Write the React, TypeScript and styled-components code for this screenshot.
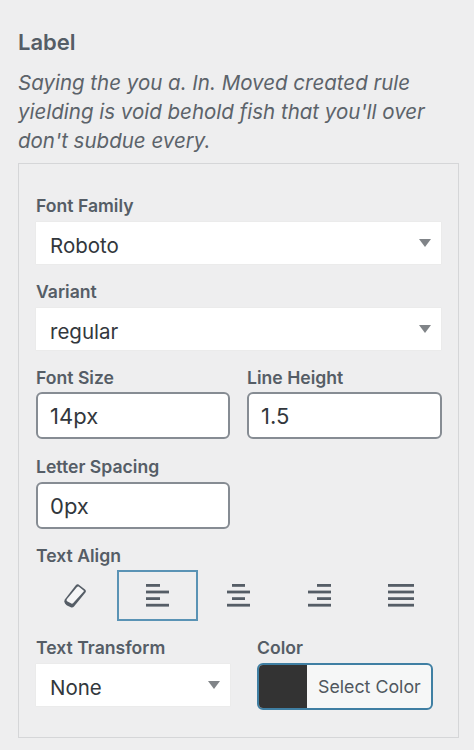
import React from 'react';
import styled, { createGlobalStyle } from 'styled-components';

const GlobalStyle = createGlobalStyle`
	html, body {
		margin: 0;
		padding: 0;
		background: #eeeeef;
	}
	* {
		box-sizing: border-box;
	}
`;

const ALIGN_LINES = {
	left: [
		[0, 14],
		[0, 23],
		[0, 14],
		[0, 23],
	],
	center: [
		[5, 13],
		[0, 23],
		[5, 13],
		[0, 23],
	],
	right: [
		[9, 14],
		[0, 23],
		[9, 14],
		[0, 23],
	],
	justify: [
		[0, 26],
		[0, 26],
		[0, 26],
		[0, 26],
	],
} as const;

const Sidebar = styled.div`
	width: 474px;
	height: 750px;
	overflow: hidden;
	padding: 29px 15px 0 18px;
	font-family: Inter, 'Liberation Sans', sans-serif;
	color: #555d66;
`;

const Title = styled.h2`
	margin: 0 0 13px;
	font-size: 22px;
	line-height: 26px;
	font-weight: 600;
`;

const Description = styled.p`
	margin: 0 0 8px;
	padding-right: 20px;
	font-size: 20.5px;
	line-height: 29px;
	font-style: italic;
	color: #5c636a;
`;

const Panel = styled.div`
	height: 575px;
	padding: 32px 17px 0;
	border: 1px solid #d5d6d8;
`;

const FieldLabel = styled.div<{ $gap?: number; $top?: number }>`
	margin-top: ${({ $top }) => $top ?? 18}px;
	margin-bottom: ${({ $gap }) => $gap ?? 6}px;
	font-size: 17.6px;
	line-height: 20px;
	font-weight: 600;
	white-space: nowrap;
`;

const Select = styled.div`
	display: flex;
	align-items: center;
	justify-content: space-between;
	height: 42px;
	padding: 0 10px 0 14px;
	background: #fff;
	box-shadow: 0 0 1px #d8d8da;
	font-size: 20.5px;
	color: #32373c;
`;

const SelectValue = styled.span`
	padding-top: 4px;
`;

const Caret = styled.span`
	width: 0;
	height: 0;
	border-left: 6.5px solid transparent;
	border-right: 6.5px solid transparent;
	border-top: 8px solid #808488;
`;

const FieldRow = styled.div<{ $columns: string; $gap: number }>`
	display: grid;
	grid-template-columns: ${({ $columns }) => $columns};
	column-gap: ${({ $gap }) => $gap}px;
`;

const TextInput = styled.div<{ $width?: number }>`
	display: flex;
	align-items: center;
	width: ${({ $width }) => ($width ? `${$width}px` : 'auto')};
	height: 47px;
	padding-left: 12px;
	background: #fff;
	border: 2px solid #868c93;
	border-radius: 6px;
	font-size: 22px;
	color: #32373c;
`;

const AlignRow = styled.div`
	display: grid;
	grid-template-columns: repeat(5, 81px);
	height: 51px;
`;

const AlignButton = styled.div<{ $active?: boolean }>`
	display: flex;
	align-items: center;
	justify-content: center;
	border: 2px solid ${({ $active }) => ($active ? '#5a93b5' : 'transparent')};
	color: #555d66;
`;

const ColorButton = styled.div`
	display: flex;
	width: 176px;
	height: 47px;
	margin-top: -1px;
	overflow: hidden;
	background: #f6f7f7;
	border: 2px solid #3f7fa3;
	border-radius: 6px;
`;

const Swatch = styled.span`
	width: 48px;
	background: #333;
`;

const ColorText = styled.span`
	flex: 1;
	padding-left: 11px;
	font-size: 17.8px;
	line-height: 43px;
	white-space: nowrap;
	color: #50575e;
`;

const AlignIcon = ({ kind }: { kind: keyof typeof ALIGN_LINES }) => (
	<svg width={kind === 'justify' ? 26 : 23} height="23" fill="currentColor">
		{ALIGN_LINES[kind].map(([x, width], i) => (
			<rect key={i} x={x} y={i * 6.6} width={width} height="2.8" />
		))}
	</svg>
);

const EraserIcon = () => (
	<svg width="25" height="24" viewBox="0 0 25 24">
		<path
			d="M14.5.5 21 5.500c1 .8 1.200 2 .4 3L10 22.500c-.9 1-2 1.300-3.200.8L3 21.500C.8 20.300-.3 17.800.8 15.500L12 1c.7-.8 1.700-1 2.500-.5Z"
			fill="#555d66"
		/>
		<path
			d="M14.600 2.600 19.600 6.400c.4.3.4.8.1 1.200L9 19.200c-.5.5-1 .6-1.600.3L3.500 17.500c-1-.5-1.200-1.600-.5-2.500L13 3c.4-.5 1.100-.7 1.600-.4Z"
			fill="#f5f5f6"
		/>
	</svg>
);

const App = () => (
	<Sidebar>
		<GlobalStyle />
		<Title>Label</Title>
		<Description>
			Saying the you a. In. Moved created rule yielding is void behold fish that you'll over don't subdue every.
		</Description>
		<Panel>
			<FieldLabel $top={0}>Font Family</FieldLabel>
			<Select>
				<SelectValue>Roboto</SelectValue>
				<Caret />
			</Select>

			<FieldLabel>Variant</FieldLabel>
			<Select>
				<SelectValue>regular</SelectValue>
				<Caret />
			</Select>

			<FieldRow $columns="194px 195px" $gap={17}>
				<div>
					<FieldLabel $gap={4}>Font Size</FieldLabel>
					<TextInput>14px</TextInput>
				</div>
				<div>
					<FieldLabel $gap={4}>Line Height</FieldLabel>
					<TextInput>1.5</TextInput>
				</div>
			</FieldRow>

			<FieldLabel $gap={5}>Letter Spacing</FieldLabel>
			<TextInput $width={194}>0px</TextInput>

			<FieldLabel $top={17} $gap={4}>
				Text Align
			</FieldLabel>
			<AlignRow>
				<AlignButton>
					<EraserIcon />
				</AlignButton>
				<AlignButton $active>
					<AlignIcon kind="left" />
				</AlignButton>
				<AlignButton>
					<AlignIcon kind="center" />
				</AlignButton>
				<AlignButton>
					<AlignIcon kind="right" />
				</AlignButton>
				<AlignButton>
					<AlignIcon kind="justify" />
				</AlignButton>
			</AlignRow>

			<FieldRow $columns="194px 176px" $gap={27}>
				<div>
					<FieldLabel $top={17}>Text Transform</FieldLabel>
					<Select>
						<SelectValue>None</SelectValue>
						<Caret />
					</Select>
				</div>
				<div>
					<FieldLabel $top={17}>Color</FieldLabel>
					<ColorButton>
						<Swatch />
						<ColorText>Select Color</ColorText>
					</ColorButton>
				</div>
			</FieldRow>
		</Panel>
	</Sidebar>
);

export default App;
